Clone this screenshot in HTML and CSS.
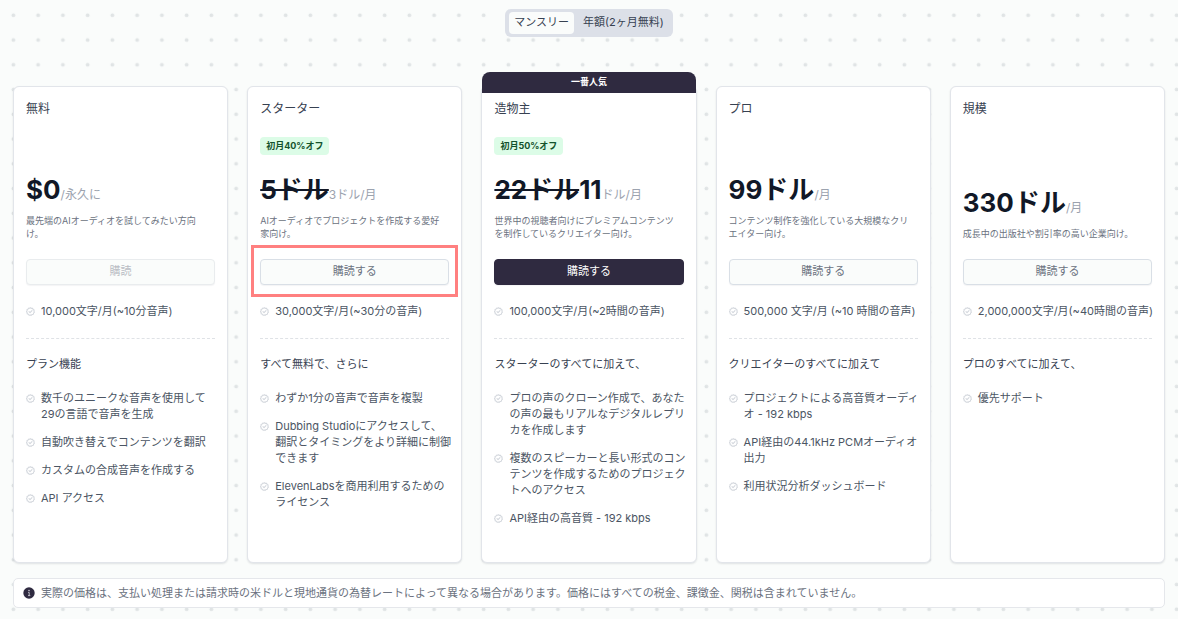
FILE: index.html
```html
<!DOCTYPE html>
<html lang="ja">
<head>
  <meta charset="UTF-8" />
  <meta name="viewport" content="width=device-width, initial-scale=1" />
  <title>料金プラン</title>
  <link rel="stylesheet" href="styles.css">
</head>
<body>

  <svg class="sprite" aria-hidden="true">
    <symbol id="check" viewBox="0 0 24 24">
      <path d="M12 1.8l2.6 1.9 3.2-.2 1 3 2.9 1.4-.6 3.1 1.4 2.9-2.4 2.2-.5 3.2-3.2.5-2.2 2.4-2.9-1.1-3.1.8-1.9-2.6-3.1-1-.1-3.2-1.9-2.6 1.7-2.7-.1-3.2 3-1.2 1.8-2.7 3.1.6z" fill="none" stroke="currentColor" stroke-width="2.8" stroke-linejoin="round"/>
      <path d="M8 12.4l2.8 2.8L16 9.5" fill="none" stroke="currentColor" stroke-width="2.8" stroke-linecap="round" stroke-linejoin="round"/>
    </symbol>
  </svg>

  <main class="page">

    <div class="toggle">
      <button type="button" class="toggle-btn active">マンスリー</button>
      <button type="button" class="toggle-btn">年額(2ヶ月無料)</button>
    </div>

    <div class="plans">

      <section class="card">
        <div class="card-head">
          <h2 class="plan-name">無料</h2>
          <p class="price"><strong>$0</strong><span>/永久に</span></p>
          <p class="desc">最先端のAIオーディオを試してみたい方向<br>け。</p>
        </div>
        <div class="action"><button type="button" class="btn" disabled>購読</button></div>
        <p class="quota"><svg class="check"><use href="#check"/></svg>10,000文字/月(~10分音声)</p>
        <h3 class="features-title">プラン機能</h3>
        <ul class="features">
          <li><svg class="check"><use href="#check"/></svg><span>数千のユニークな音声を使用して<br>29の言語で音声を生成</span></li>
          <li><svg class="check"><use href="#check"/></svg><span>自動吹き替えでコンテンツを翻訳</span></li>
          <li><svg class="check"><use href="#check"/></svg><span>カスタムの合成音声を作成する</span></li>
          <li><svg class="check"><use href="#check"/></svg><span>API アクセス</span></li>
        </ul>
      </section>

      <section class="card">
        <div class="card-head">
          <h2 class="plan-name">スターター</h2>
          <span class="discount">初月40%オフ</span>
          <p class="price"><strong><s>5ドル</s></strong><span>3ドル/月</span></p>
          <p class="desc">AIオーディオでプロジェクトを作成する愛好<br>家向け。</p>
        </div>
        <div class="action highlight"><button type="button" class="btn">購読する</button></div>
        <p class="quota"><svg class="check"><use href="#check"/></svg>30,000文字/月(~30分の音声)</p>
        <h3 class="features-title">すべて無料で、さらに</h3>
        <ul class="features">
          <li><svg class="check"><use href="#check"/></svg><span>わずか1分の音声で音声を複製</span></li>
          <li><svg class="check"><use href="#check"/></svg><span>Dubbing Studioにアクセスして、<br>翻訳とタイミングをより詳細に制御<br>できます</span></li>
          <li><svg class="check"><use href="#check"/></svg><span>ElevenLabsを商用利用するための<br>ライセンス</span></li>
        </ul>
      </section>

      <section class="card">
        <div class="ribbon">一番人気</div>
        <div class="card-head">
          <h2 class="plan-name">造物主</h2>
          <span class="discount">初月50%オフ</span>
          <p class="price"><strong><s>22ドル</s>11</strong><span>ドル/月</span></p>
          <p class="desc">世界中の視聴者向けにプレミアムコンテンツ<br>を制作しているクリエイター向け。</p>
        </div>
        <div class="action"><button type="button" class="btn btn-dark">購読する</button></div>
        <p class="quota"><svg class="check"><use href="#check"/></svg>100,000文字/月(~2時間の音声)</p>
        <h3 class="features-title">スターターのすべてに加えて、</h3>
        <ul class="features">
          <li><svg class="check"><use href="#check"/></svg><span>プロの声のクローン作成で、あなた<br>の声の最もリアルなデジタルレプリ<br>カを作成します</span></li>
          <li><svg class="check"><use href="#check"/></svg><span>複数のスピーカーと長い形式のコン<br>テンツを作成するためのプロジェク<br>トへのアクセス</span></li>
          <li><svg class="check"><use href="#check"/></svg><span>API経由の高音質 - 192 kbps</span></li>
        </ul>
      </section>

      <section class="card">
        <div class="card-head">
          <h2 class="plan-name">プロ</h2>
          <p class="price"><strong>99ドル</strong><span>/月</span></p>
          <p class="desc">コンテンツ制作を強化している大規模なクリ<br>エイター向け。</p>
        </div>
        <div class="action"><button type="button" class="btn">購読する</button></div>
        <p class="quota"><svg class="check"><use href="#check"/></svg>500,000 文字/月 (~10 時間の音声)</p>
        <h3 class="features-title">クリエイターのすべてに加えて</h3>
        <ul class="features">
          <li><svg class="check"><use href="#check"/></svg><span>プロジェクトによる高音質オーディ<br>オ - 192 kbps</span></li>
          <li><svg class="check"><use href="#check"/></svg><span>API経由の44.1kHz PCMオーディオ<br>出力</span></li>
          <li><svg class="check"><use href="#check"/></svg><span>利用状況分析ダッシュボード</span></li>
        </ul>
      </section>

      <section class="card">
        <div class="card-head">
          <h2 class="plan-name">規模</h2>
          <p class="price"><strong>330ドル</strong><span>/月</span></p>
          <p class="desc">成長中の出版社や割引率の高い企業向け。</p>
        </div>
        <div class="action"><button type="button" class="btn">購読する</button></div>
        <p class="quota"><svg class="check"><use href="#check"/></svg>2,000,000文字/月(~40時間の音声)</p>
        <h3 class="features-title">プロのすべてに加えて、</h3>
        <ul class="features">
          <li><svg class="check"><use href="#check"/></svg><span>優先サポート</span></li>
        </ul>
      </section>

    </div>

    <div class="notice">
      <svg class="info" viewBox="0 0 12 12" aria-hidden="true">
        <circle cx="6" cy="6" r="5.7" fill="#2f2a40"/>
        <circle cx="6" cy="3.6" r=".8" fill="#c9c7d0"/>
        <path d="M5.2 5.5H6.2V8.5M5 8.6H7.3" fill="none" stroke="#c9c7d0" stroke-width=".9"/>
      </svg>
      <p>実際の価格は、支払い処理または請求時の米ドルと現地通貨の為替レートによって異なる場合があります。価格にはすべての税金、課徴金、関税は含まれていません。</p>
    </div>

  </main>

</body>
</html>
```

FILE: styles.css
```css
* {
  box-sizing: border-box;
}
body {
  margin: 0;
  font-family: Inter, "Noto Sans CJK JP", sans-serif;
  font-size: 11px;
  line-height: 16px;
  color: #4b5563;
}
h2, h3, p, ul {
  margin: 0;
  padding: 0;
  font-weight: 400;
}
button {
  font: inherit;
  cursor: pointer;
}
.sprite {
  position: absolute;
  width: 0;
  height: 0;
}

/* dotted backdrop, four dots per tile each way */
.page {
  min-height: 100vh;
  padding: 9px 13px 11px;
  background-color: #fafcfb;
  background-image: url("data:image/svg+xml,%3Csvg xmlns='http://www.w3.org/2000/svg' width='99' height='99'%3E%3Cdefs%3E%3Cpattern id='d' width='24.75' height='24.75' patternUnits='userSpaceOnUse'%3E%3Ccircle cx='13.4' cy='15.3' r='1.9' fill='%23e0e4e5'/%3E%3C/pattern%3E%3C/defs%3E%3Crect width='99' height='99' fill='url(%23d)'/%3E%3C/svg%3E");
}

/* billing toggle */
.toggle {
  display: flex;
  width: fit-content;
  margin: 0 auto;
  padding: 3px 4px;
  border-radius: 6px;
  background: #dce0e8;
}
.toggle-btn {
  height: 22px;
  padding: 0 5px 2px;
  border: none;
  border-radius: 4px;
  background: none;
  color: #374151;
}
.toggle-btn + .toggle-btn {
  padding-left: 9px;
}
.toggle-btn.active {
  background: #fafcfb;
}

/* plan cards */
.plans {
  display: grid;
  grid-template-columns: repeat(5, 1fr);
  gap: 19px;
  margin-top: 49px;
}
.card {
  position: relative;
  min-width: 0;
  min-height: 477px;
  padding: 14px 12px;
  border: 1px solid #e2e5ea;
  border-radius: 6px;
  background: #fff;
  box-shadow: 0 1px 2px rgba(30, 41, 59, 0.12);
  white-space: nowrap;
}
.ribbon {
  position: absolute;
  top: -15px;
  left: 0;
  right: 0;
  padding-bottom: 2px;
  border-radius: 8px 8px 0 0;
  background: #2f2a40;
  color: #fff;
  font-size: 9px;
  font-weight: 700;
  line-height: 19px;
  text-align: center;
}
.card-head {
  display: flex;
  flex-direction: column;
  align-items: flex-start;
  height: 139px;
}
.plan-name {
  font-size: 12px;
  color: #374151;
}
.discount {
  margin-top: 20px;
  padding: 0 6px;
  border-radius: 4px;
  background: #dcfce7;
  color: #14532d;
  font-size: 9px;
  font-weight: 700;
  line-height: 18px;
}
.price {
  margin-top: auto;
  font-size: 12px;
  line-height: 32px;
  color: #9ca3af;
}
.price strong {
  font-size: 26px;
  font-weight: 700;
  color: #111827;
}
.desc {
  margin-top: 3px;
  font-size: 9px;
  line-height: 13px;
  color: #6b7280;
}
.action {
  position: relative;
  margin-top: 19px;
}
.highlight::after {
  content: "";
  position: absolute;
  inset: -14px -9px -12px;
  border: 3px solid #ff8080;
  pointer-events: none;
}
.btn {
  display: block;
  width: 100%;
  height: 26px;
  padding: 0 0 2px;
  border: 1px solid #d9dfe6;
  border-radius: 4px;
  background: #fafcfb;
  color: #6b7280;
  box-shadow: 0 1px 1px rgba(30, 41, 59, 0.05);
}
.btn:disabled {
  border-color: #e9ecee;
  color: #b9bdc4;
  cursor: default;
}
.btn-dark {
  border-color: #2f2a40;
  background: #2f2a40;
  color: #fff;
}
.quota {
  display: flex;
  gap: 6px;
  margin-top: 18px;
  padding-bottom: 19px;
  border-bottom: 1px dashed #dfe2e6;
}
.check {
  flex: none;
  width: 9px;
  height: 9px;
  margin-top: 4px;
  color: #d3d7dd;
}
.features-title {
  margin-top: 17px;
  font-size: 11px;
  color: #374151;
}
.features {
  display: flex;
  flex-direction: column;
  gap: 12px;
  margin-top: 18px;
  list-style: none;
}
.features li {
  display: flex;
  gap: 6px;
}

.notice {
  display: flex;
  align-items: center;
  gap: 6px;
  margin-top: 15px;
  padding: 6px 9px;
  border: 1px solid #e5e7eb;
  border-radius: 5px;
  background: #fff;
  color: #6b7280;
}
.info {
  flex: none;
  width: 12px;
  height: 12px;
}
```
